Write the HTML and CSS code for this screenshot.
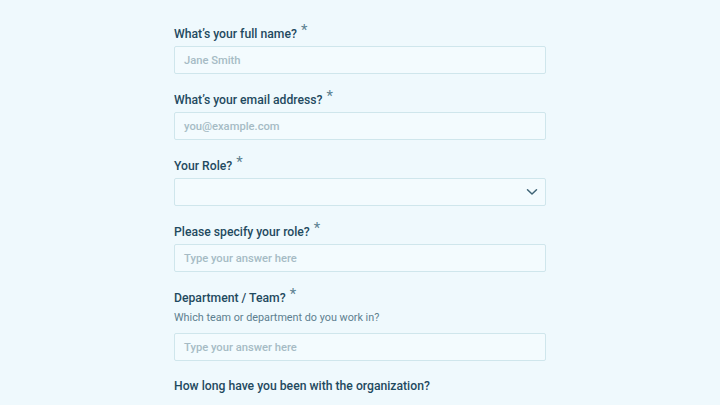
FILE: index.html
```html
<!DOCTYPE html>
<html>
<head>
<meta charset="utf-8">
<link rel="stylesheet" href="styles.css">
</head>
<body>
<form class="form">
  <div class="field">
    <label class="label">What’s your full name? <span class="req">*</span></label>
    <div class="input"><span class="ph">Jane Smith</span></div>
  </div>
  <div class="field">
    <label class="label">What’s your email address? <span class="req">*</span></label>
    <div class="input"><span class="ph">you@example.com</span></div>
  </div>
  <div class="field">
    <label class="label">Your Role? <span class="req">*</span></label>
    <div class="input select">
      <span class="ph"></span>
      <svg class="chev" width="12" height="8" viewBox="0 0 12 8"><path d="M1.5 1.8 L6 6 L10.5 1.8" fill="none" stroke="#3f6476" stroke-width="1.5" stroke-linecap="round" stroke-linejoin="round"/></svg>
    </div>
  </div>
  <div class="field">
    <label class="label">Please specify your role? <span class="req">*</span></label>
    <div class="input"><span class="ph">Type your answer here</span></div>
  </div>
  <div class="field">
    <label class="label">Department / Team? <span class="req">*</span></label>
    <div class="desc">Which team or department do you work in?</div>
    <div class="input"><span class="ph">Type your answer here</span></div>
  </div>
  <div class="field">
    <label class="label">How long have you been with the organization?</label>
    <div class="options"><span class="box"></span></div>
  </div>
</form>
</body>
</html>
```

FILE: styles.css
```css
html, body {
  margin: 0;
  padding: 0;
  background: #eff9fd;
  font-family: Roboto, "Liberation Sans", sans-serif;
}
body {
  height: 405px;
  overflow: hidden;
}
.form {
  width: 372px;
  margin-left: 174px;
  padding-top: 24px;
  display: flex;
  flex-direction: column;
  gap: 16px;
}
.field {
  display: flex;
  flex-direction: column;
}
.label {
  height: 18px;
  line-height: 18px;
  font-size: 12.2px;
  font-weight: 500;
  color: #1f4a60;
  margin-bottom: 4px;
  white-space: nowrap;
}
.req {
  font-size: 15px;
  font-weight: 400;
  color: #5e8292;
  position: relative;
  top: -3px;
  margin-left: 1px;
}
.desc {
  font-size: 10.8px;
  line-height: 16px;
  color: #5d7f8f;
  margin-bottom: 7px;
}
.input {
  box-sizing: border-box;
  height: 28px;
  border: 1px solid #cfe6ec;
  background: #f3fbfe;
  border-radius: 2px;
  display: flex;
  align-items: center;
  padding: 0 9px;
}
.ph {
  font-size: 11.2px;
  font-weight: 500;
  color: #a6bbc5;
  flex: 1;
}
.chev {
  margin-right: -2px;
}
.options {
  padding-top: 7px;
}
.box {
  display: block;
  width: 19px;
  height: 19px;
  box-sizing: border-box;
  border: 1px solid #c6dfe7;
  background: #f3fbfe;
  border-radius: 2px;
}
```
